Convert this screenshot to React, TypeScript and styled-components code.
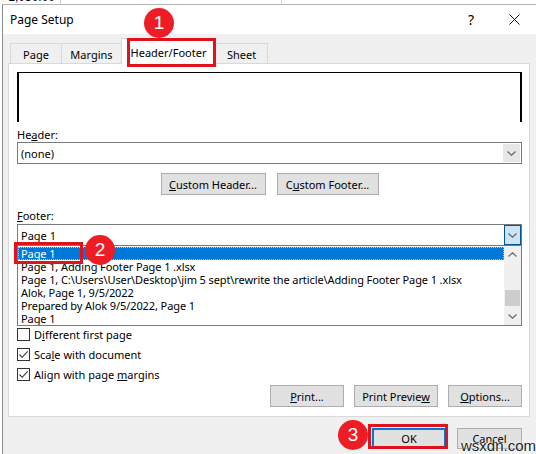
import React from 'react'
import styled, { createGlobalStyle } from 'styled-components'

const GlobalStyle = createGlobalStyle`
  html, body {
    margin: 0;
    padding: 0;
    background: #ffffff;
    overflow: hidden;
  }
  * {
    box-sizing: border-box;
  }
`

const UI_FONT = `"Noto Sans", "Open Sans", "Liberation Sans", sans-serif`

const StyledPage = styled.div`
  position: relative;
  width: 536px;
  height: 454px;
  overflow: hidden;
  background: #ffffff;
  font-family: ${UI_FONT};
  font-size: 11px;
  color: #000;
`

/* sliver of the worksheet peeking above the dialog */
const StyledSheet = styled.div`
  display: flex;
  height: 4px;
  overflow: hidden;
`

const StyledCell = styled.div<{ $w: number }>`
  width: ${({ $w }) => $w}px;
  flex-shrink: 0;
  border-right: 1px solid #d4d4d4;
  font-family: "Liberation Sans", Arial, sans-serif;
  font-size: 12px;
  line-height: 12px;
  text-align: right;
  padding-right: 5px;

  span {
    display: block;
    margin-top: -9px;
  }
`

const StyledDialog = styled.div`
  margin-left: 2px;
  width: 540px;
  height: 450px;
  background: #f0f0f0;
  border-left: 1px solid #8a8a8a;
  border-top: 1px solid #b4b4b4;
  display: flex;
  flex-direction: column;
`

const StyledTitleBar = styled.div`
  height: 29px;
  background: #ffffff;
  display: flex;
  align-items: center;
  padding-left: 7px;
  padding-right: 22px;
  font-size: 12px;

  .title {
    flex: 1;
  }

  .help {
    font-size: 14px;
    margin-right: 35px;
  }
`

const StyledBody = styled.div`
  padding: 4px 12px 0 5px;
  display: flex;
  flex-direction: column;
`

const StyledTabRow = styled.div`
  display: flex;
  align-items: flex-end;
  height: 25px;
  margin-left: 2px;
  position: relative;
  z-index: 1;
`

const StyledTab = styled.div<{ $w: number; $active?: boolean }>`
  width: ${({ $w }) => $w}px;
  height: ${({ $active }) => ($active ? 26 : 20)}px;
  margin-bottom: ${({ $active }) => ($active ? -1 : 0)}px;
  background: ${({ $active }) => ($active ? '#ffffff' : '#f0f0f0')};
  border: 1px solid #d9d9d9;
  border-bottom: none;
  margin-left: -1px;
  display: flex;
  align-items: center;
  justify-content: center;
  padding-top: ${({ $active }) => ($active ? 1 : 2)}px;

  &:first-child {
    margin-left: 0;
  }
`

const StyledPanel = styled.div`
  height: 354px;
  background: #ffffff;
  border: 1px solid #d9d9d9;
  padding: 8px 7px 0 8px;
  display: flex;
  flex-direction: column;
`

const StyledPreview = styled.div<{ $h: number; $top?: number }>`
  height: ${({ $h }) => $h}px;
  margin-top: ${({ $top }) => $top ?? 0}px;
  border: 2px solid #000;
  border-top-width: 1px;
  border-bottom: none;
  flex-shrink: 0;
`

const StyledLabel = styled.div<{ $top: number }>`
  margin-top: ${({ $top }) => $top}px;
  line-height: 15px;
  height: 15px;
`

const StyledCombo = styled.div`
  height: 22px;
  border: 1px solid #7a7a7a;
  display: flex;
  align-items: center;
  background: #ffffff;

  .value {
    flex: 1;
    padding-left: 3px;
  }
`

const StyledComboButton = styled.div<{ $open?: boolean }>`
  width: 17px;
  align-self: stretch;
  display: flex;
  align-items: center;
  justify-content: center;
  background: ${({ $open }) => ($open ? '#cce4f7' : '#e6e6e6')};
  border: 1px solid ${({ $open }) => ($open ? '#005499' : '#e6e6e6')};
  margin: ${({ $open }) => ($open ? '0' : '1px')};
`

const StyledCenterRow = styled.div`
  display: flex;
  justify-content: center;
  gap: 11px;
  margin-top: 9px;
`

const StyledRightRow = styled.div<{ $top: number; $gap: number }>`
  display: flex;
  justify-content: flex-end;
  gap: ${({ $gap }) => $gap}px;
  margin-top: ${({ $top }) => $top}px;
`

const StyledButton = styled.div<{ $w: number; $default?: boolean }>`
  width: ${({ $w }) => $w}px;
  height: 22px;
  background: #e1e1e1;
  border: ${({ $default }) => ($default ? '2px solid #0078d7' : '1px solid #adadad')};
  display: flex;
  align-items: center;
  justify-content: center;
  flex-shrink: 0;
`

const StyledFooterWrap = styled.div`
  position: relative;
  margin-top: 1px;
`

const StyledList = styled.div`
  position: absolute;
  left: 0;
  right: 0;
  top: 100%;
  height: 80px;
  background: #ffffff;
  border: 1px solid #7a7a7a;
  border-top: none;
  display: flex;
  z-index: 2;
`

const StyledItems = styled.div`
  flex: 1;
  min-width: 0;
  overflow: hidden;
  padding-top: 1px;
`

const StyledItem = styled.div<{ $selected?: boolean }>`
  height: 13px;
  line-height: 13px;
  padding-left: 3px;
  white-space: nowrap;
  letter-spacing: -0.1px;
  background: ${({ $selected }) => ($selected ? '#0078d7' : 'transparent')};
  color: ${({ $selected }) => ($selected ? '#ffffff' : '#000')};
  outline: ${({ $selected }) => ($selected ? '1px dotted #9fcaf0' : 'none')};
  outline-offset: -1px;
`

const StyledScrollbar = styled.div`
  width: 17px;
  background: #f0f0f0;
  display: flex;
  flex-direction: column;

  .arrow {
    height: 17px;
    display: flex;
    align-items: center;
    justify-content: center;
  }

  .track {
    flex: 1;
    display: flex;
    flex-direction: column;
    justify-content: flex-end;
    padding-bottom: 2px;
  }

  .thumb {
    height: 16px;
    margin: 0 1px;
    background: #cdcdcd;
  }
`

const StyledCheckRow = styled.div`
  display: flex;
  align-items: center;
  height: 20px;
  gap: 4px;
`

const StyledBox = styled.div`
  width: 13px;
  height: 13px;
  border: 1px solid #333;
  background: #fff;
  display: flex;
  align-items: center;
  justify-content: center;
`

const StyledDialogFooter = styled.div`
  display: flex;
  justify-content: flex-end;
  gap: 11px;
  padding: 11px 20px 0 0;

  ${StyledButton} {
    height: 21px;
  }
`

/* red callouts drawn over the dialog */
const StyledMark = styled.div<{ $x: number; $y: number; $w: number; $h: number }>`
  position: absolute;
  left: ${({ $x }) => $x}px;
  top: ${({ $y }) => $y}px;
  width: ${({ $w }) => $w}px;
  height: ${({ $h }) => $h}px;
  border: 3px solid #e0121b;
  z-index: 5;
`

const StyledBadge = styled.div<{ $x: number; $y: number }>`
  position: absolute;
  left: ${({ $x }) => $x - 15}px;
  top: ${({ $y }) => $y - 15}px;
  width: 30px;
  height: 30px;
  border-radius: 50%;
  background: #ee1c24;
  color: #fff;
  font-family: "Liberation Sans", Arial, sans-serif;
  font-size: 19px;
  display: flex;
  align-items: center;
  justify-content: center;
  z-index: 6;
`

const StyledWatermark = styled.div`
  position: absolute;
  left: 461px;
  top: 437px;
  font-family: "Liberation Sans", Arial, sans-serif;
  font-size: 15px;
  color: #222;
  text-shadow: 0 0 2px #fff, 0 0 2px #fff;
  z-index: 6;
`

const Chevron = ({ up }: { up?: boolean }) => (
  <svg width="9" height="5" viewBox="0 0 9 5">
    <path
      d={up ? 'M0.5 4.5 L4.5 0.8 L8.5 4.5' : 'M0.5 0.5 L4.5 4.2 L8.5 0.5'}
      fill="none"
      stroke="#606060"
      strokeWidth="1.1"
    />
  </svg>
)

const Check = () => (
  <svg width="11" height="11" viewBox="0 0 11 11">
    <path d="M1.5 5.5 L4.2 8.3 L9.7 2.3" fill="none" stroke="#333" strokeWidth="1.1" />
  </svg>
)

const CloseIcon = () => (
  <svg width="11" height="11" viewBox="0 0 11 11">
    <path d="M0.5 0.5 L10.5 10.5 M10.5 0.5 L0.5 10.5" stroke="#111" strokeWidth="1" />
  </svg>
)

const footerItems = [
  'Page 1, Adding Footer Page 1 .xlsx',
  'Page 1, C:\\Users\\User\\Desktop\\jim 5 sept\\rewrite the article\\Adding Footer Page 1 .xlsx',
  'Alok, Page 1, 9/5/2022',
  'Prepared by Alok 9/5/2022, Page 1',
  'Page 1',
]

const CheckOption = ({ checked, children }: { checked?: boolean; children: React.ReactNode }) => (
  <StyledCheckRow>
    <StyledBox>{checked && <Check />}</StyledBox>
    <span>{children}</span>
  </StyledCheckRow>
)

export default function App() {
  return (
    <>
      <GlobalStyle />
      <StyledPage>
        <StyledSheet>
          <StyledCell $w={61}>
            <span>1,050.00</span>
          </StyledCell>
          <StyledCell $w={221} />
        </StyledSheet>

        <StyledDialog>
          <StyledTitleBar>
            <span className="title">Page Setup</span>
            <span className="help">?</span>
            <CloseIcon />
          </StyledTitleBar>

          <StyledBody>
            <StyledTabRow>
              <StyledTab $w={52}>Page</StyledTab>
              <StyledTab $w={61}>Margins</StyledTab>
              <StyledTab $w={95} $active>
                Header/Footer
              </StyledTab>
              <StyledTab $w={53}>Sheet</StyledTab>
            </StyledTabRow>

            <StyledPanel>
              <StyledPreview $h={50} />

              <StyledLabel $top={5}>
                He<u>a</u>der:
              </StyledLabel>
              <StyledCombo>
                <span className="value">(none)</span>
                <StyledComboButton>
                  <Chevron />
                </StyledComboButton>
              </StyledCombo>

              <StyledCenterRow>
                <StyledButton $w={105}>
                  <span>
                    <u>C</u>ustom Header...
                  </span>
                </StyledButton>
                <StyledButton $w={102}>
                  <span>
                    C<u>u</u>stom Footer...
                  </span>
                </StyledButton>
              </StyledCenterRow>

              <StyledLabel $top={13}>
                <u>F</u>ooter:
              </StyledLabel>
              <StyledFooterWrap>
                <StyledCombo>
                  <span className="value">Page 1</span>
                  <StyledComboButton $open>
                    <Chevron />
                  </StyledComboButton>
                </StyledCombo>
                <StyledList>
                  <StyledItems>
                    <StyledItem $selected>Page 1</StyledItem>
                    {footerItems.map((t, i) => (
                      <StyledItem key={i}>{t}</StyledItem>
                    ))}
                  </StyledItems>
                  <StyledScrollbar>
                    <div className="arrow">
                      <Chevron up />
                    </div>
                    <div className="track">
                      <div className="thumb" />
                    </div>
                    <div className="arrow">
                      <Chevron />
                    </div>
                  </StyledScrollbar>
                </StyledList>
              </StyledFooterWrap>
              <StyledPreview $h={72} $top={6} />

              <CheckOption>
                D<u>i</u>fferent first page
              </CheckOption>
              <CheckOption checked>
                Sca<u>l</u>e with document
              </CheckOption>
              <CheckOption checked>
                Align with page <u>m</u>argins
              </CheckOption>

              <StyledRightRow $top={1} $gap={10}>
                <StyledButton $w={74}>
                  <span>
                    <u>P</u>rint...
                  </span>
                </StyledButton>
                <StyledButton $w={84}>
                  <span>
                    Print Previe<u>w</u>
                  </span>
                </StyledButton>
                <StyledButton $w={74}>
                  <span>
                    <u>O</u>ptions...
                  </span>
                </StyledButton>
              </StyledRightRow>
            </StyledPanel>
          </StyledBody>

          <StyledDialogFooter>
            <StyledButton $w={74} $default>
              OK
            </StyledButton>
            <StyledButton $w={65}>Cancel</StyledButton>
          </StyledDialogFooter>
        </StyledDialog>

        <StyledMark $x={127} $y={38} $w={89} $h={29} />
        <StyledBadge $x={159} $y={23}>1</StyledBadge>
        <StyledMark $x={14} $y={242} $w={69} $h={22} />
        <StyledBadge $x={100} $y={250}>2</StyledBadge>
        <StyledMark $x={368} $y={424} $w={80} $h={25} />
        <StyledBadge $x={353} $y={435}>3</StyledBadge>
        <StyledWatermark>wsxdn.com</StyledWatermark>
      </StyledPage>
    </>
  )
}
